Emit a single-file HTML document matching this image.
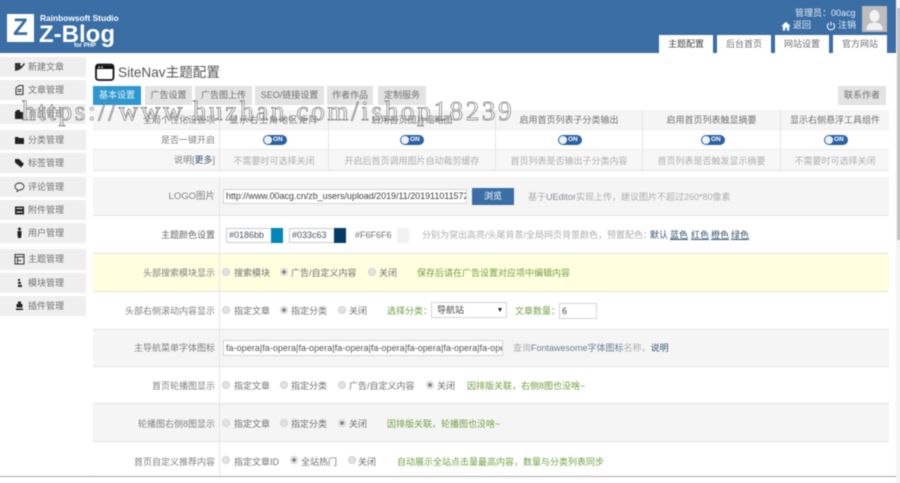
<!DOCTYPE html>
<html lang="zh-CN">
<head>
<meta charset="utf-8">
<title>SiteNav主题配置</title>
<style>
html,body{margin:0;padding:0;width:900px;height:477px;overflow:hidden;background:#fff}
body{font-family:"Liberation Sans","Noto Sans CJK SC",sans-serif;font-size:9px;color:#707070}
#w{position:absolute;left:-6px;top:-6px;width:912px;height:489px;overflow:hidden;filter:blur(.45px)}
#i{position:absolute;left:6px;top:6px;width:900px;height:477px}
.a,.t,.r,.c{position:absolute}
.t,.c{white-space:nowrap;line-height:12px}
.c{text-align:center}
.lb{right:685px;color:#808080;text-align:right}
.g{color:#6f9f42}
.d{color:#adadad}
.k{color:#707070}
.l{color:#3a5472}
.s{position:absolute;left:-6px;width:92px;height:20px;background:#efefef}
.s span{position:absolute;left:34px;top:4px;line-height:12px;color:#707070}
.s svg{position:absolute;left:20px;top:4px}
.tab{position:absolute;top:86px;height:19px;background:#e3e3e3;line-height:19px;text-align:center;color:#707070}
.ht{position:absolute;top:35px;height:18px;width:54px;background:#fff;line-height:19px;text-align:center;color:#707070}
.row{position:absolute;left:93px;width:796px;box-sizing:border-box;border-bottom:1px solid #e2e2e2}
.v{position:absolute;width:1px;background:#e4e4e4}
.r{width:6px;height:6px;border-radius:50%;background:#e2e2e2;border:1px solid #d2d2d2;box-sizing:content-box}
.r.on{background:radial-gradient(circle,#808080 0 1.7px,#eee 2.2px)}
.ip{position:absolute;box-sizing:border-box;background:#fff;border:1px solid #d5d5d5;font-size:9px;line-height:13px;padding-left:2px;color:#555;white-space:nowrap;overflow:hidden}
.tg{position:absolute;top:135px;width:24px;height:10px;border-radius:5px;background:#2a61a5}
.tg i{position:absolute;left:1px;top:1px;width:8px;height:8px;border-radius:50%;background:#eef2f7}
.tg b{position:absolute;left:10px;top:0;font-size:6.5px;line-height:10px;color:#fff}
#wm{position:absolute;left:22px;top:94px;font-family:"Liberation Serif",serif;font-size:27px;line-height:34px;letter-spacing:2.7px;color:rgba(255,255,255,.35);-webkit-text-stroke:.7px #7c7c7c;white-space:nowrap}
</style>
</head>
<body>
<div id="w"><div id="i">
<!-- header -->
<div class="a" style="left:-6px;top:-6px;width:902px;height:59px;background:#3a6ea5"></div>
<div class="a" style="left:7px;top:14px;width:27px;height:28px;background:#fff"></div>
<div class="a" style="left:7px;top:14px;width:27px;height:28px;line-height:28px;text-align:center;color:#3a6ea5;font-weight:bold;font-size:24px">Z</div>
<div class="t" style="left:40px;top:12px;color:#fff;font-weight:bold;font-size:8.4px">Rainbowsoft Studio</div>
<div class="t" style="left:39px;top:23px;color:#fff;font-weight:bold;font-size:24px;line-height:24px">Z-Blog</div>
<div class="t" style="left:74px;top:40px;color:#fff;font-size:6px;font-weight:bold">for PHP</div>

<div class="t" style="left:795px;top:7px;color:#e4ebf3;font-size:9px">管理员：00acg</div>
<svg class="a" style="left:781px;top:21px" width="10" height="10" viewBox="0 0 10 10"><path d="M5 .8 .3 5.2h1.5V9.6h2.3V6.6h1.8v3h2.3V5.2h1.5z" fill="#fff"/></svg>
<div class="t" style="left:793px;top:19px;color:#e4ebf3">返回</div>
<svg class="a" style="left:826px;top:21px" width="10" height="10" viewBox="0 0 10 10"><path d="M3 2.2A3.6 3.6 0 1 0 7 2.2M5 .8V4.6" fill="none" stroke="#fff" stroke-width="1"/></svg>
<div class="t" style="left:838px;top:19px;color:#e4ebf3">注销</div>
<div class="a" style="left:862px;top:6px;width:25px;height:26px;background:#bdbdbd;overflow:hidden">
<svg width="25" height="26" viewBox="0 0 25 26"><ellipse cx="12.5" cy="10" rx="5" ry="6" fill="#f2f2f2"/><path d="M4.5 23c0-5 4-6.500 8-6.500s8 1.500 8 6.500v1H4.500z" fill="#f2f2f2"/></svg>
</div>
<div class="ht" style="left:659px;color:#444">主题配置</div>
<div class="ht" style="left:717px">后台首页</div>
<div class="ht" style="left:775px">网站设置</div>
<div class="ht" style="left:833px">官方网站</div>

<!-- scrollbar -->
<div class="a" style="left:896px;top:-6px;width:10px;height:489px;background:#f4f4f4"></div>
<div class="a" style="left:897px;top:8px;width:9px;height:232px;background:#c4c4c4"></div>

<!-- sidebar -->
<div class="s" style="top:57px"><svg width="11" height="12" viewBox="0 0 11 12"><path d="M1 2h6l-1 1.500L8 6 5 9 1 10zM6 7l4-5 1 1-4 5z" fill="#333"/></svg><span>新建文章</span></div>
<div class="s" style="top:80px"><svg width="11" height="12" viewBox="0 0 11 12"><path d="M2 4 5 1.500h4v9H2zM3.500 5.500h4M3.500 7.500h4" fill="none" stroke="#333" stroke-width="1"/></svg><span>文章管理</span></div>
<div class="s" style="top:104px"><svg width="11" height="12" viewBox="0 0 11 12"><path d="M1 4 3 2h3v2h3v7H1z" fill="#222"/></svg><span>页面管理</span></div>
<div class="s" style="top:130px"><svg width="11" height="12" viewBox="0 0 11 12"><path d="M1 3h3l1 1h5v6H1z" fill="#222"/></svg><span>分类管理</span></div>
<div class="s" style="top:153px"><svg width="11" height="12" viewBox="0 0 11 12"><path d="M1 2h4l5 5-3 3.500-6-5z" fill="#222"/></svg><span>标签管理</span></div>
<div class="s" style="top:177px"><svg width="11" height="12" viewBox="0 0 11 12"><path d="M5.500 2C8 2 10 3.500 10 5.500S8 9 5.500 9L3 10.500 3.300 8.500C1.800 8 1 7 1 5.500 1 3.500 3 2 5.500 2z" fill="none" stroke="#333" stroke-width=".9"/></svg><span>评论管理</span></div>
<div class="s" style="top:200px"><svg width="11" height="12" viewBox="0 0 11 12"><path d="M1 2.500h9v8H1z" fill="#222"/><path d="M2.500 4.500h6M2.500 8h6" stroke="#eee" stroke-width="1"/></svg><span>附件管理</span></div>
<div class="s" style="top:223px"><svg width="11" height="12" viewBox="0 0 11 12"><circle cx="5.500" cy="2" r="1.500" fill="#222"/><path d="M3.500 4h4v3.500L7 11H4l-.5-3.500z" fill="#222"/></svg><span>用户管理</span></div>
<div class="s" style="top:249px;height:21px"><svg width="11" height="12" viewBox="0 0 11 12"><path d="M1 1.500h9v9.500H1zM1 4h9M3.500 4v7M3.500 7.500h4" fill="none" stroke="#333" stroke-width="1"/></svg><span>主题管理</span></div>
<div class="s" style="top:273px"><svg width="11" height="12" viewBox="0 0 11 12"><path d="M4 2h2v2H4zM4 5h3v2H4zM4 8h4v2H4z" fill="#222"/></svg><span>模块管理</span></div>
<div class="s" style="top:296px"><svg width="11" height="12" viewBox="0 0 11 12"><path d="M4 1.500h3V4h1.500v3.500h-6V4H4zM2 8.500h7V10H2z" fill="#222"/></svg><span>插件管理</span></div>

<!-- title -->
<svg class="a" style="left:95px;top:63px" width="20" height="19" viewBox="0 0 20 19"><rect x="1" y="1.500" width="17.500" height="15.500" rx="2.500" fill="#fff" stroke="#111" stroke-width="1.800"/><path d="M1 2.500h17.500V6H1z" fill="#111"/><circle cx="4" cy="4.200" r=".8" fill="#fff"/><circle cx="7" cy="4.200" r=".8" fill="#fff"/></svg>
<div class="t" style="left:118px;top:64px;font-size:13.600px;line-height:18px;color:#555">SiteNav主题配置</div>

<div class="tab" style="left:93px;width:48px;background:#2f97cf;color:#e6f3fa">基本设置</div>
<div class="tab" style="left:145px;width:47px">广告设置</div>
<div class="tab" style="left:195px;width:57px">广告图上传</div>
<div class="tab" style="left:255px;width:69px">SEO/链接设置</div>
<div class="tab" style="left:327px;width:46px">作者作品</div>
<div class="tab" style="left:378px;width:48px">定制服务</div>
<div class="tab" style="left:838px;width:48px">联系作者</div>

<!-- table 1 -->
<div class="row" style="top:110px;height:20px;background:#f5f5f5;border-bottom:1px solid #ececec"></div>
<div class="row" style="top:130px;height:20px;background:#fff;border-bottom:1px solid #ececec"></div>
<div class="row" style="top:150px;height:21px;background:#f7f7f7"></div>
<div class="v" style="left:219px;top:110px;height:60px"></div>
<div class="v" style="left:328px;top:110px;height:60px"></div>
<div class="v" style="left:495px;top:110px;height:60px"></div>
<div class="v" style="left:642px;top:110px;height:60px"></div>
<div class="v" style="left:780px;top:110px;height:60px"></div>

<div class="t lb" style="top:114px;right:685px">全局个性化设置项</div>
<div class="c k" style="left:220px;width:108px;top:114px;letter-spacing:.9px">显示右上角地区矩阵</div>
<div class="c k" style="left:329px;width:166px;top:114px">启用首页图片缩略图</div>
<div class="c k" style="left:496px;width:146px;top:114px">启用首页列表子分类输出</div>
<div class="c k" style="left:643px;width:137px;top:114px">启用首页列表触显摘要</div>
<div class="c k" style="left:781px;width:108px;top:114px">显示右侧悬浮工具组件</div>

<div class="t lb" style="top:134px">是否一键开启</div>
<div class="tg" style="left:263px"><i></i><b>ON</b></div>
<div class="tg" style="left:400px"><i></i><b>ON</b></div>
<div class="tg" style="left:558px"><i></i><b>ON</b></div>
<div class="tg" style="left:701px"><i></i><b>ON</b></div>
<div class="tg" style="left:824px"><i></i><b>ON</b></div>

<div class="t lb" style="top:154px">说明[<span class="l">更多</span>]</div>
<div class="c d" style="left:220px;width:108px;top:155px">不需要时可选择关闭</div>
<div class="c d" style="left:329px;width:166px;top:155px">开启后首页调用图片自动裁剪缓存</div>
<div class="c d" style="left:496px;width:146px;top:155px">首页列表是否输出子分类内容</div>
<div class="c d" style="left:643px;width:137px;top:155px">首页列表是否触发显示摘要</div>
<div class="c d" style="left:781px;width:108px;top:155px">不需要时可选择关闭</div>

<!-- table 2 rows -->
<div class="row" style="top:177px;height:39px;background:#f5f5f5"></div>
<div class="row" style="top:216px;height:38px;background:#fff"></div>
<div class="row" style="top:254px;height:38px;background:#ffffdf"></div>
<div class="row" style="top:292px;height:38px;background:#fff"></div>
<div class="row" style="top:330px;height:37px;background:#f5f5f5"></div>
<div class="row" style="top:367px;height:37px;background:#fff"></div>
<div class="row" style="top:404px;height:38px;background:#f5f5f5"></div>
<div class="row" style="top:442px;height:35px;background:#fff;border-bottom:0"></div>
<div class="a" style="left:-6px;top:476px;width:902px;height:1px;background:#aaa"></div>
<div class="v" style="left:219px;top:177px;height:299px"></div>

<!-- labels -->
<div class="t lb" style="top:191px;font-size:9.500px">LOGO图片</div>
<div class="t lb" style="top:229px;color:#666">主题颜色设置</div>
<div class="t lb" style="top:267px">头部搜索模块显示</div>
<div class="t lb" style="top:305px">头部右侧滚动内容显示</div>
<div class="t lb" style="top:342px">主导航菜单字体图标</div>
<div class="t lb" style="top:380px">首页轮播图显示</div>
<div class="t lb" style="top:418px">轮播图右侧8图显示</div>
<div class="t lb" style="top:456px">首页自定义推荐内容</div>

<!-- logo -->
<div class="ip" style="left:223px;top:189px;width:244px;height:15px;color:#444;letter-spacing:-.04px">http://www.00acg.cn/zb_users/upload/2019/11/201911011572</div>
<div class="a" style="left:472px;top:188px;width:42px;height:17px;background:#3a6ea5;color:#fff;text-align:center;line-height:17px">浏览</div>
<div class="t d" style="left:528px;top:191px">基于<span style="color:#889">UEditor</span>实现上传，建议图片不超过260*80像素</div>

<!-- colors -->
<div class="ip" style="left:226px;top:228px;width:46px;height:15px;border-color:#ccc;color:#456">#0186bb</div>
<div class="a" style="left:271px;top:228px;width:12px;height:15px;background:#0186bb"></div>
<div class="ip" style="left:289px;top:228px;width:46px;height:15px;border-color:#ccc;color:#456">#033c63</div>
<div class="a" style="left:334px;top:228px;width:12px;height:15px;background:#033c63"></div>
<div class="t k" style="left:355px;top:229px">#F6F6F6</div>
<div class="a" style="left:397px;top:228px;width:12px;height:15px;background:#f2f2f2"></div>
<div class="t d" style="left:422px;top:229px">分别为突出高亮/头尾背景/全局网页背景颜色，预置配色：</div>
<div class="t l" style="left:650px;top:229px">默认</div>
<div class="t l" style="left:670px;top:229px;text-decoration:underline">蓝色</div>
<div class="t l" style="left:691px;top:229px;text-decoration:underline">红色</div>
<div class="t l" style="left:711px;top:229px;text-decoration:underline">橙色</div>
<div class="t l" style="left:731px;top:229px;text-decoration:underline">绿色</div>

<!-- yellow row -->
<div class="r" style="left:222px;top:268px"></div><div class="t k" style="left:234px;top:267px">搜索模块</div>
<div class="r on" style="left:280px;top:268px"></div><div class="t k" style="left:291px;top:267px">广告/自定义内容</div>
<div class="r" style="left:368px;top:268px"></div><div class="t k" style="left:379px;top:267px">关闭</div>
<div class="t g" style="left:417px;top:267px">保存后请在广告设置对应项中编辑内容</div>

<!-- scroll row -->
<div class="r" style="left:222px;top:306px"></div><div class="t k" style="left:234px;top:305px">指定文章</div>
<div class="r on" style="left:280px;top:306px"></div><div class="t k" style="left:291px;top:305px">指定分类</div>
<div class="r" style="left:338px;top:306px"></div><div class="t k" style="left:349px;top:305px">关闭</div>
<div class="t g" style="left:387px;top:305px">选择分类：</div>
<div class="ip" style="left:431px;top:302px;width:76px;height:16px;line-height:14px;color:#444;padding-left:5px">导航站</div>
<div class="a" style="left:498px;top:308px;width:0;height:0;border-left:2.500px solid transparent;border-right:2.500px solid transparent;border-top:4px solid #222"></div>
<div class="t g" style="left:515px;top:305px">文章数量：</div>
<div class="ip" style="left:559px;top:303px;width:38px;height:16px;line-height:14px;padding-left:2px;color:#444">6</div>

<!-- nav icon row -->
<div class="ip" style="left:223px;top:340px;width:280px;height:16px;line-height:14px;color:#555;letter-spacing:.04px">fa-opera|fa-opera|fa-opera|fa-opera|fa-opera|fa-opera|fa-opera|fa-opera</div>
<div class="t d" style="left:513px;top:342px">查询<span style="color:#6a7f96">Fontawesome字体图标</span>名称，<span class="l">说明</span></div>

<!-- carousel -->
<div class="r" style="left:222px;top:381px"></div><div class="t k" style="left:234px;top:380px">指定文章</div>
<div class="r" style="left:280px;top:381px"></div><div class="t k" style="left:291px;top:380px">指定分类</div>
<div class="r" style="left:338px;top:381px"></div><div class="t k" style="left:349px;top:380px">广告/自定义内容</div>
<div class="r on" style="left:426px;top:381px"></div><div class="t k" style="left:437px;top:380px">关闭</div>
<div class="t g" style="left:467px;top:380px">因排版关联，右侧8图也没啥~</div>

<div class="r" style="left:222px;top:419px"></div><div class="t k" style="left:234px;top:418px">指定文章</div>
<div class="r" style="left:280px;top:419px"></div><div class="t k" style="left:291px;top:418px">指定分类</div>
<div class="r on" style="left:338px;top:419px"></div><div class="t k" style="left:349px;top:418px">关闭</div>
<div class="t g" style="left:387px;top:418px">因排版关联，轮播图也没啥~</div>

<div class="r" style="left:222px;top:456px"></div><div class="t k" style="left:234px;top:456px">指定文章ID</div>
<div class="r on" style="left:290px;top:456px"></div><div class="t k" style="left:301px;top:456px">全站热门</div>
<div class="r" style="left:348px;top:456px"></div><div class="t k" style="left:358px;top:456px">关闭</div>
<div class="t g" style="left:397px;top:456px">自动展示全站点击量最高内容，数量与分类列表同步</div>

<div id="wm">https://www.huzhan.com/ishop18239</div>
</div></div>
</body>
</html>
